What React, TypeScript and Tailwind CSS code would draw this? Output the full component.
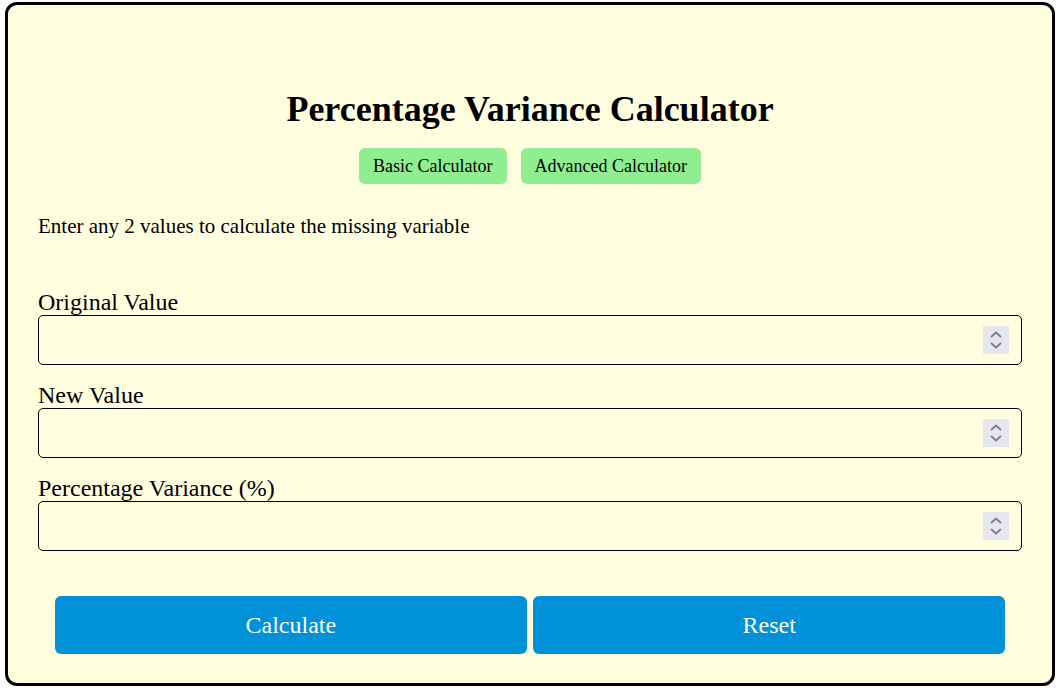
export default function App() {
  const fields = ['Original Value', 'New Value', 'Percentage Variance (%)']
  return (
    <div className="w-[1060px] h-[688px] pt-[2px] px-[5px] font-['Liberation_Serif',serif] text-black">
      <div className="h-[684px] border-[3px] border-black rounded-[12px] bg-[#ffffe0] px-[30px] pt-[86px]">
        <h1 className="text-[36px] leading-[37px] font-bold text-center">Percentage Variance Calculator</h1>
        <div className="flex justify-center gap-[14px] mt-[20px]">
          <button className="h-[36px] px-[14px] bg-[#90ee90] rounded-[6px] text-[18px]">Basic Calculator</button>
          <button className="h-[36px] px-[14px] bg-[#90ee90] rounded-[6px] text-[18px]">Advanced Calculator</button>
        </div>
        <p className="text-[21px] leading-[21px] mt-[32px]">Enter any 2 values to calculate the missing variable</p>
        <div className="mt-[55px] flex flex-col gap-[20px]">
          {fields.map((f) => (
            <div key={f}>
              <label className="block text-[24px] leading-[21px] mb-[2px]">{f}</label>
              <div className="relative">
                <input
                  type="number"
                  className="block w-full h-[50px] border border-black rounded-[5px] bg-transparent px-2 text-[18px] [appearance:textfield] [&::-webkit-inner-spin-button]:appearance-none [&::-webkit-outer-spin-button]:appearance-none"
                />
                <div className="absolute right-[13px] top-[11px] w-[26px] h-[28px] bg-[#e6e6ee] flex flex-col items-center justify-center gap-[4px]">
                  <svg width="12" height="7" viewBox="0 0 12 7" fill="none" stroke="#7d7d85" strokeWidth="1.8">
                    <path d="M1 6 L6 1.5 L11 6" />
                  </svg>
                  <svg width="12" height="7" viewBox="0 0 12 7" fill="none" stroke="#7d7d85" strokeWidth="1.8">
                    <path d="M1 1 L6 5.5 L11 1" />
                  </svg>
                </div>
              </div>
            </div>
          ))}
        </div>
        <div className="flex justify-center gap-[6px] mt-[45px]">
          <button className="w-[48%] h-[58px] bg-[#0091d8] text-white rounded-[6px] text-[24px]">Calculate</button>
          <button className="w-[48%] h-[58px] bg-[#0091d8] text-white rounded-[6px] text-[24px]">Reset</button>
        </div>
      </div>
    </div>
  )
}
